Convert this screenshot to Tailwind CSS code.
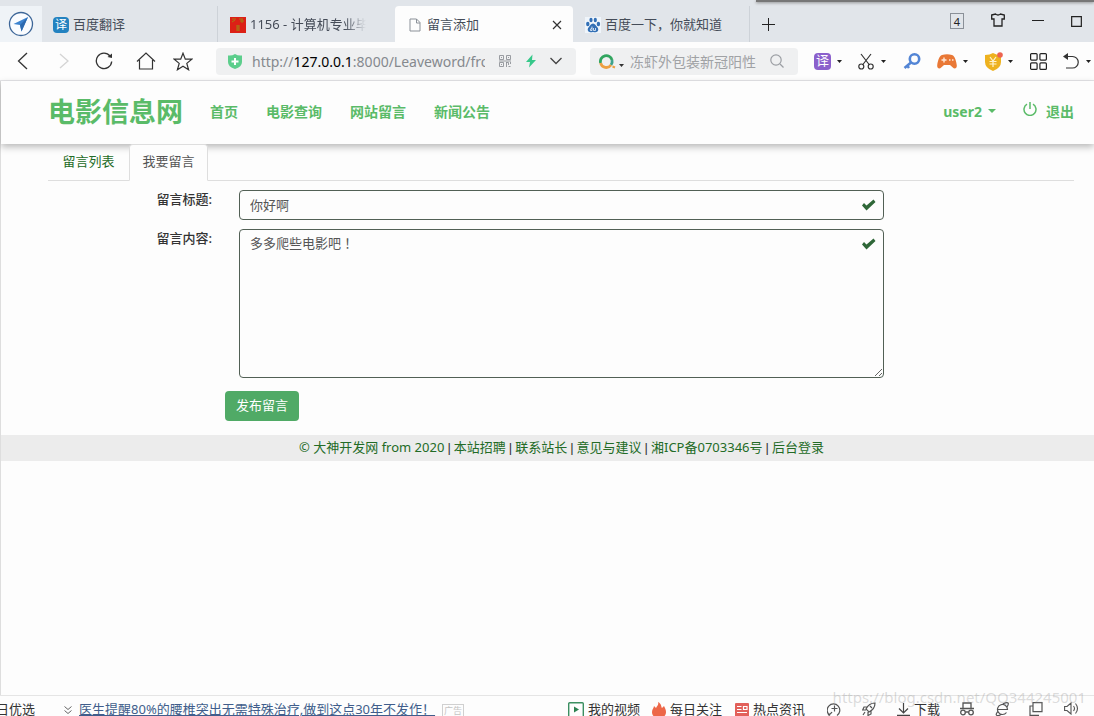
<!DOCTYPE html>
<html lang="zh-CN">
<head>
<meta charset="utf-8">
<title>留言添加</title>
<script src="https://cdn.jsdelivr.net/npm/@tailwindcss/browser@4"></script>
</head>
<body class="flex h-screen flex-col overflow-hidden bg-[#fdfdfd] font-['Noto_Sans','Noto_Sans_CJK_SC',sans-serif] text-[13px] text-[#333]">

<!-- Tab strip -->
<header class="relative flex h-[42px] shrink-0 items-stretch bg-[#e1e5ea] pt-[6px] text-[#454c58]">
  <div class="absolute top-0 right-0 left-[756px] h-[2px] bg-[#777] shadow-[0_1px_3px_#888]"></div>
  <button aria-label="浏览器主页" class="flex w-[42px] shrink-0 items-center justify-center bg-[#eff3f7]">
    <svg class="size-[26px]" viewBox="0 0 26 26"><circle cx="13" cy="13" r="11.5" fill="#fafcff" stroke="#3d6698" stroke-width="1.3"/><path d="M20 6 5.500 13l6.500 1 1.500 6.500Z" fill="#3c83cf"/><path d="M20 6 12 14l1.500 6.500Z" fill="#2c69af"/></svg>
  </button>
  <a href="#" class="flex w-[176px] items-center gap-[4px] border-r border-[#cdd2d8] pt-[2px] pl-[11px]">
    <span class="flex size-4 items-center justify-center rounded-sm bg-[#2382c0] text-xs text-white">译</span><span>百度翻译</span>
  </a>
  <a href="#" class="flex w-[177px] items-center gap-[4px] pt-[2px] pl-[12px]">
    <svg class="size-4 shrink-0" viewBox="0 0 16 16"><path fill="#dc2016" d="M0 0h16v16H0z"/><path d="M2 2h4M2 5l3-2M9 2h4M10 4h4M12 2v4M6 9h4M6 11h4M8 8v6M6 13h4" stroke="#a77a12" stroke-width="1"/></svg>
    <span class="w-[116px] overflow-hidden whitespace-nowrap [mask-image:linear-gradient(to_right,black_82%,transparent)]">1156 - 计算机专业毕</span>
  </a>
  <a href="#" class="flex w-[178px] items-center gap-[6px] rounded-t-sm bg-[#fdfdfd] pt-[2px] pr-[11px] pl-[14px]">
    <svg class="h-[14px] w-[12px]" viewBox="0 0 12 14" fill="none" stroke="#8b9198"><path d="M1 1h6.500L11 4.500V13H1zM7.500 1v4H11"/></svg>
    <span class="flex-1">留言添加</span>
    <svg class="size-[10px]" viewBox="0 0 10 10" stroke="#333" stroke-width="1.200"><path d="m1 1 8 8M9 1 1 9"/></svg>
  </a>
  <a href="#" class="flex w-[177px] items-center gap-[4px] border-r border-[#cdd2d8] pt-[2px] pl-[12px]">
    <svg class="size-4" viewBox="0 0 16 16"><path fill="#eff5fb" d="M0 0h16v16H0z"/><g fill="#326fb5"><ellipse cx="2.800" cy="7" rx="1.700" ry="2.200"/><ellipse cx="6" cy="3" rx="1.600" ry="2.300"/><ellipse cx="10.300" cy="3" rx="1.600" ry="2.300"/><ellipse cx="13.400" cy="7" rx="1.700" ry="2.200"/><path d="M8 6.500c2 0 2.800 2.300 4.300 3.700 2 2 .7 5-1.800 5-1 0-1.600-.3-2.500-.3s-1.500.3-2.500.3c-2.500 0-3.800-3-1.800-5C5.200 8.800 6 6.500 8 6.500Z"/></g><path d="M7 9.500v4H5.500q-1-1.500 1.500-2.500M8.500 11v2.500h2V11" stroke="#eff5fb" fill="none" stroke-width=".8"/></svg>
    <span>百度一下，你就知道</span>
  </a>
  <button aria-label="新标签页" class="flex w-[37px] items-center justify-center"><svg class="size-[13px]" viewBox="0 0 13 13" stroke="#222"><path d="M6.500 0v13M0 6.500h13"/></svg></button>
  <div class="ml-auto flex items-start gap-[27px] pt-[7px] pr-[12px] text-[#222]">
    <button aria-label="标签页数量" class="flex h-[16px] w-[14px] items-center justify-center border border-[#8a9098] text-[11px] leading-none">4</button>
    <button aria-label="皮肤"><svg class="h-[15px] w-[14px]" viewBox="0 0 14 15" fill="none" stroke="#222" stroke-width="1.300"><path d="M.7 2 4.500 1q2.500 2 5 0l3.800 1v4H11v7H3V6H.7z"/></svg></button>
    <button aria-label="最小化"><svg class="h-[15px] w-[12px]" viewBox="0 0 12 15" stroke="#222"><path d="M0 7.500h12"/></svg></button>
    <button aria-label="最大化" class="pt-[3px]"><svg class="size-[11px]" viewBox="0 0 10 10" fill="none" stroke="#222" stroke-width="1.100"><path d="M.6.6h8.800v8.800H.6z"/></svg></button>
  </div>
</header>

<!-- Address bar -->
<div class="flex h-[39px] shrink-0 items-center border-b border-[#e5e5e8] bg-[#fdfdfd]">
  <div class="flex w-[216px] shrink-0 items-center pl-[17px]">
    <button aria-label="后退" class="w-[41px]"><svg class="h-[18px] w-[11px]" viewBox="0 0 11 18" fill="none" stroke="#333" stroke-width="1.300"><path d="M10 1 1.500 9 10 17"/></svg></button>
    <button aria-label="前进" class="w-[37px]"><svg class="h-[18px] w-[11px]" viewBox="0 0 11 18" fill="none" stroke="#d4d4d4" stroke-width="1.300"><path d="m2 2 8 7-8 7"/></svg></button>
    <button aria-label="刷新" class="w-[41px]"><svg class="size-[18px]" viewBox="0 0 18 18" fill="none" stroke="#333" stroke-width="1.300"><path d="M15 4A7.700 7.700 0 1 0 16.700 9.500"/><path d="m12.500 5 4.500 1V1.500z" fill="#333" stroke="none"/></svg></button>
    <button aria-label="主页" class="w-[37px]"><svg class="h-[18px] w-[20px]" viewBox="0 0 20 18" fill="none" stroke="#333" stroke-width="1.200"><path d="M1 9.500 10 1l9 8.500M3.500 8v9h13V8"/></svg></button>
    <button aria-label="收藏"><svg class="h-[19px] w-[20px]" viewBox="0 0 20 19" fill="none" stroke="#333" stroke-width="1.200"><path d="m10 1.200 2.300 6h6.500l-5 4.200 1.800 6.400L10 14.300l-5.600 3.500 1.800-6.400-5-4.200h6.500z"/></svg></button>
  </div>
  <div class="flex h-[27px] w-[360px] shrink-0 items-center rounded bg-[#eff0f1] pr-[14px] pl-[12px]">
    <svg class="h-[15px] w-[14px]" viewBox="0 0 14 15"><path d="M0 1.500Q4 2 7 0q3 2 7 1.500V8q0 5-7 7-7-2-7-7z" fill="#5cce8c"/><path d="M7 4v7M3.500 7.500h7" stroke="#fff" stroke-width="2"/></svg>
    <div class="ml-[10px] w-[233px] overflow-hidden text-[14px] whitespace-nowrap text-[#85898e]">http://<span class="text-black">127.0.0.1</span>:8000/Leaveword/front</div>
    <svg class="ml-[14px] size-[12px]" viewBox="0 0 12 12" fill="none" stroke="#8e9297"><path d="M.5.500h4v4h-4zM7.500.500h4v4h-4zM.5 7.500h4v4h-4zM7.500 7v5M7 7.500h2.500V10M11.500 7v2M9.500 11.500h2M2 2.500h1M9 2.500h1M2 9.500h1M0 6h12" stroke-width=".9"/></svg>
    <svg class="ml-[15px] h-[14px] w-[10px]" viewBox="0 0 10 14"><path d="M6.500.500 0 8h4l-1 5.500L10 6H6z" fill="#36c88a"/></svg>
    <button aria-label="展开地址" class="ml-auto"><svg class="h-[8px] w-[12px]" viewBox="0 0 12 8" fill="none" stroke="#444" stroke-width="1.300"><path d="m.5 1 5.500 5.500L11.500 1"/></svg></button>
  </div>
  <div class="ml-[14px] flex h-[27px] w-[208px] shrink-0 items-center rounded bg-[#eff0f1] pr-[14px] pl-[9px]">
    <svg class="h-[15px] w-[17px]" viewBox="0 0 17 15" fill="none" stroke-width="2.800"><path d="M1.600 9A5.800 5.800 0 0 1 13 6" stroke="#31a55f"/><path d="M13 6a5.800 5.800 0 0 1-1 5" stroke="#3da28b"/><path d="M12 11A5.800 5.800 0 0 1 1.600 9" stroke="#eda043"/><path d="m13.500 12.500 2.500 1" stroke="#eda043" stroke-width="2"/></svg>
    <svg class="mt-[8px] ml-[3px] h-[3px] w-[5px]" viewBox="0 0 5 3"><path d="M0 0h5L2.500 3z" fill="#333"/></svg>
    <input aria-label="搜索" placeholder="冻虾外包装新冠阳性" class="ml-[6px] min-w-0 flex-1 bg-transparent text-[14px] outline-none placeholder:text-[#a0a2a5]">
    <button aria-label="搜索"><svg class="size-[14px]" viewBox="0 0 14 14" fill="none" stroke="#9b9ea3" stroke-width="1.200"><circle cx="6" cy="6" r="5.200"/><path d="m10 10 3.500 3.500"/></svg></button>
  </div>
  <div class="ml-[16px] flex flex-1 items-center justify-between pr-[3px]">
    <button class="flex items-center gap-[6px]"><span class="flex size-[17px] items-center justify-center rounded-sm bg-[#8b60cc] text-[13px] text-white">译</span><svg class="h-[3px] w-[5px]" viewBox="0 0 5 3"><path d="M0 0h5L2.500 3z" fill="#222"/></svg></button>
    <button aria-label="截图" class="flex items-center gap-[7px]"><svg class="h-[17px] w-[16px]" viewBox="0 0 16 17" fill="none" stroke="#333" stroke-width="1.200"><path d="m3 1 8.500 11M13 1 4.500 12"/><circle cx="3.300" cy="13.500" r="2.500"/><circle cx="12.700" cy="13.500" r="2.500"/></svg><svg class="h-[3px] w-[5px]" viewBox="0 0 5 3"><path d="M0 0h5L2.500 3z" fill="#222"/></svg></button>
    <button aria-label="密码"><svg class="h-[16px] w-[18px]" viewBox="0 0 18 16" fill="none" stroke="#5385d5" stroke-width="2.600"><circle cx="11.500" cy="6" r="4.700"/><path d="M8 9.500 1.500 15M4 12.500l2 2.500" /></svg></button>
    <button aria-label="游戏" class="flex items-center gap-[6px]"><svg class="h-[15px] w-[20px]" viewBox="0 0 20 15"><path d="M5 1q5-1.500 10 0c3 1 4.500 7 4.800 10.500.2 3-2.300 4-4 2L13 11H7l-2.800 2.500c-1.700 2-4.200 1-4-2C.5 8 2 2 5 1Z" fill="#e97836"/><path d="M7 3.500v5M4.500 6h5M12 6h1.500M15 6h1.500" stroke="#ffe8d8" stroke-width="1.400"/></svg><svg class="h-[3px] w-[5px]" viewBox="0 0 5 3"><path d="M0 0h5L2.500 3z" fill="#222"/></svg></button>
    <button aria-label="优惠" class="flex items-center gap-[5px]"><svg class="h-[19px] w-[19px]" viewBox="0 0 19 19"><path d="M1 3q5 0 8-2 3 2 8 2v7q0 6-8 9-8-3-8-9z" fill="#eeb21f"/><path d="m6 5 3 4 3-4M5.500 9.500h7M5.500 12h7M9 9v6" fill="none" stroke="#fff3cf" stroke-width="1.200"/><circle cx="16" cy="3" r="2.800" fill="#ed6350"/></svg><svg class="h-[3px] w-[5px]" viewBox="0 0 5 3"><path d="M0 0h5L2.500 3z" fill="#222"/></svg></button>
    <button aria-label="应用"><svg class="size-[17px]" viewBox="0 0 17 17" fill="none" stroke="#222" stroke-width="1.200"><rect x=".6" y=".6" width="6.500" height="6.500" rx="1"/><rect x="9.900" y=".6" width="6.500" height="6.500" rx="1"/><rect x=".6" y="9.900" width="6.500" height="6.500" rx="1"/><rect x="9.900" y="9.900" width="6.500" height="6.500" rx="1"/></svg></button>
    <button aria-label="撤销" class="flex items-center gap-[7px]"><svg class="h-[16px] w-[16px]" viewBox="0 0 16 16" fill="none" stroke="#333" stroke-width="1.200"><path d="M2 3.500h7.500a5.700 5.700 0 0 1 0 11.500H3"/><path d="M0 3.500 5 0v7z" fill="#333" stroke="none"/></svg><svg class="h-[3px] w-[5px]" viewBox="0 0 5 3"><path d="M0 0h5L2.500 3z" fill="#222"/></svg></button>
  </div>
</div>

<!-- Page -->
<main class="min-h-0 flex-1 border-l border-[#dedede]">
  <nav class="relative flex h-[63px] items-center bg-[#fdfdfd] pr-[20px] pb-[3px] pl-[47px] text-[14px] font-bold text-[#5abb68] shadow-[0_3px_7px_#00000045]">
    <a href="#" class="mr-[27px] pt-[2px] text-[27px]">电影信息网</a>
    <div class="flex flex-1 gap-[28px]">
      <a href="#">首页</a><a href="#">电影查询</a><a href="#">网站留言</a><a href="#">新闻公告</a>
    </div>
    <button class="mr-[27px] flex items-center gap-[6px]">user2 <svg class="h-[4px] w-[8px]" viewBox="0 0 8 4"><path d="M0 0h8L4 4z" fill="#5abb68"/></svg></button>
    <a href="#" class="flex items-center gap-[9px]"><svg class="mb-[4px] size-[14px]" viewBox="0 0 14 14" fill="none" stroke="#5abb68" stroke-width="1.500"><path d="M4 2.200a6 6 0 1 0 6 0M7 0v7"/></svg>退出</a>
  </nav>

  <div class="mr-[20px] ml-[47px]">
    <div class="flex h-[37px] border-b border-[#dedede]">
      <a href="#" class="w-[81px] pt-[8px] text-center text-[#236b26]">留言列表</a>
      <a href="#" class="relative -mb-px w-[79px] rounded-t border border-[#dedede] border-b-[#fdfdfd] bg-[#fdfdfd] pt-[7px] text-center text-[#555]">我要留言</a>
    </div>
    <form class="mt-[9px] mr-[190px] grid grid-cols-[164px_1fr] gap-x-[27px] gap-y-[9px]">
      <label for="title" class="text-right leading-[18px] font-medium">留言标题:</label>
      <div class="relative">
        <input id="title" value="你好啊" class="block h-[30px] w-full rounded border border-[#526055] px-[10px] pb-[2px] text-[#555] outline-none">
        <svg class="absolute top-[9px] right-[8px] h-[12px] w-[14px]" viewBox="0 0 14 12"><path d="m0 6.500 2-2.500 2.500 2.500L11.500.500l2 2.500-9 8.500z" fill="#2f6738"/></svg>
      </div>
      <label for="content" class="text-right leading-[18px] font-medium">留言内容:</label>
      <div class="relative">
        <textarea id="content" class="block h-[149px] w-full resize rounded border border-[#526055] px-[10px] py-[4px] font-['Noto_Sans','Noto_Sans_CJK_TC',sans-serif] text-[#555] outline-none" lang="zh-TW">多多爬些电影吧！</textarea>
        <svg class="absolute top-[9px] right-[8px] h-[12px] w-[14px]" viewBox="0 0 14 12"><path d="m0 6.500 2-2.500 2.500 2.500L11.500.500l2 2.500-9 8.500z" fill="#2f6738"/></svg>
      </div>
      <button type="button" class="col-span-2 mt-[4px] ml-[177px] h-[30px] w-[74px] rounded bg-[#50aa66] text-white">发布留言</button>
    </form>
  </div>

  <footer class="mt-[14px] flex h-[26px] justify-center gap-[3px] bg-[#ececec] pr-[20px] pl-[48px] leading-[25px] whitespace-nowrap text-[#333]">
    <a href="#" class="text-[#236b26]">© 大神开发网 from 2020</a><span class="font-['Liberation_Sans',sans-serif]">|</span>
    <a href="#" class="text-[#236b26]">本站招聘</a><span class="font-['Liberation_Sans',sans-serif]">|</span>
    <a href="#" class="text-[#236b26]">联系站长</a><span class="font-['Liberation_Sans',sans-serif]">|</span>
    <a href="#" class="text-[#236b26]">意见与建议</a><span class="font-['Liberation_Sans',sans-serif]">|</span>
    <a href="#" class="text-[#236b26]">湘ICP备0703346号</a><span class="font-['Liberation_Sans',sans-serif]">|</span>
    <a href="#" class="text-[#236b26]">后台登录</a>
  </footer>
</main>

<!-- Status bar, its lower part below the window edge -->
<div class="relative flex h-[21px] shrink-0 items-start border-t border-[#e5e5e5] bg-[#fdfdfd] pt-[4px] whitespace-nowrap">
  <div class="flex w-[568px] shrink-0 items-start">
    <a href="#" class="-ml-[4px]">日优选</a>
    <svg class="mt-[6px] ml-[29px] h-[8px] w-[8px]" viewBox="0 0 8 8" fill="none" stroke="#666"><path d="m.5.500 3.500 3 3.500-3M.5 4.500l3.500 3 3.500-3"/></svg>
    <a href="#" class="ml-[7px] text-[#405d8b] underline">医生提醒80%的腰椎突出无需特殊治疗,做到这点30年不发作！</a>
    <span class="mt-[4px] ml-[7px] border border-[#d0d0d0] px-[1px] text-[9px] leading-[12px] text-[#c4c4c4]">广告</span>
  </div>
  <div class="flex flex-1 items-start pr-[15px]">
    <a href="#" class="flex w-[84px] gap-[4px]"><svg class="mt-[2px] size-4" viewBox="0 0 16 16"><rect x=".7" y=".7" width="14.600" height="14.600" rx="1" fill="none" stroke="#3b8f61" stroke-width="1.400"/><path d="m6 4.500 5 3-5 3z" fill="#2b8150"/></svg>我的视频</a>
    <a href="#" class="flex w-[83px] gap-[4px]"><svg class="mt-[2px] h-4 w-[14px]" viewBox="0 0 14 16"><path d="M6 0c4 2 3 5 4 6l2-2c1 2 2 4 2 6 0 4-3 6-7 6s-7-2-7-6c0-3 2-4 2-6l2 2c1-2 3-3 2-6Z" fill="#ed6748"/></svg>每日关注</a>
    <a href="#" class="flex w-[92px] gap-[4px]"><svg class="mt-[3px] size-[14px]" viewBox="0 0 14 14"><rect width="14" height="14" rx="1" fill="#e2605a"/><path d="M2 3.500h4.500M2 6.500h4.500M8.500 3.500H12v3H8.500zM2 9.500h10" fill="none" stroke="#fff" stroke-width="1.200"/></svg>热点资讯</a>
    <div class="flex flex-1 items-start justify-between">
      <button aria-label="医生" class="pt-[2px]"><svg class="size-[15px]" viewBox="0 0 15 15" fill="none" stroke="#555" stroke-width="1.200"><path d="M3 13.500a6.300 6.300 0 1 1 7 0M7.500 3.500v6M4.500 6.500h6M1 13q3-1 4-3"/></svg></button>
      <button aria-label="加速" class="pt-[2px]"><svg class="size-[14px]" viewBox="0 0 14 14" fill="none" stroke="#555" stroke-width="1.200"><path d="M13 1Q7 1 4 7l3 3q6-3 6-9ZM5 5H2L.7 8H4M9 9v3l-3 1.500V10M8 4l2 2M3 10l-2 3"/></svg></button>
      <button class="flex gap-[4px]"><svg class="mt-[3px] size-[13px]" viewBox="0 0 13 13" fill="none" stroke="#444" stroke-width="1.200"><path d="M6.500 0v10M2 5.500l4.500 4.500L11 5.500M0 12.400h13"/></svg>下载</button>
      <button aria-label="无痕" class="pt-[2px]"><svg class="size-[14px]" viewBox="0 0 14 14" fill="none" stroke="#555" stroke-width="1.300"><path d="M3 6V1h8v5M0 6.500h14M5.500 10h3"/><circle cx="3" cy="10.500" r="2.300"/><circle cx="11" cy="10.500" r="2.300"/></svg></button>
      <button aria-label="兼容模式" class="pt-[2px]"><svg class="size-[14px]" viewBox="0 0 14 14" fill="none" stroke="#555" stroke-width="1.200"><path d="M3 7.500h9.500a5 5 0 1 0-1 3M8 2q4-2 5-1t-1 4M3 9q-3 4-1 4.500t4-1"/></svg></button>
      <button aria-label="分屏" class="pt-[2px]"><svg class="size-[14px]" viewBox="0 0 14 14" fill="none" stroke="#555" stroke-width="1.200"><path d="M4 .6h9v9H4zM4 4H1v9.400h9"/></svg></button>
      <button aria-label="音量" class="pt-[2px]"><svg class="h-[13px] w-[15px]" viewBox="0 0 15 13" fill="none" stroke="#555" stroke-width="1.100"><path d="M.6 4.500H3L7 1v11L3 8.500H.6zM9.500 4q2 2.500 0 5M11.500 1.500q4 5 0 10"/></svg></button>
    </div>
  </div>
  <div class="pointer-events-none absolute right-[8px] bottom-[8px] text-[15px] text-[#888]/30">https://blog.csdn.net/QQ344245001</div>
</div>
</body>
</html>
